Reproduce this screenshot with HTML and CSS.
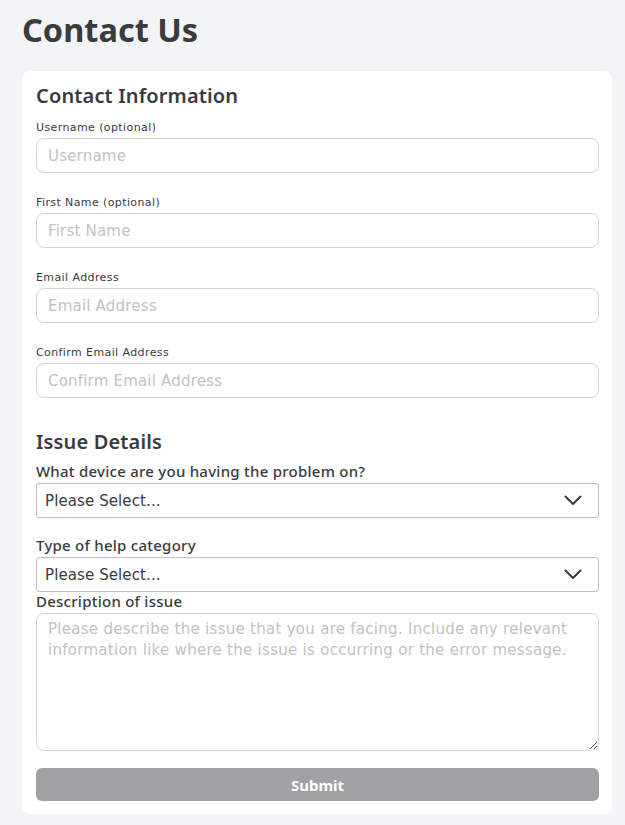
FILE: index.html
```html
<!DOCTYPE html>
<html lang="en">
<head>
<meta charset="utf-8">
<title>Contact Us</title>
<link rel="stylesheet" href="styles.css">
</head>
<body>
<div class="page">
  <h1 class="page-title">Contact Us</h1>
  <form class="card">
    <h2 class="section-title">Contact Information</h2>

    <div class="field field-first">
      <label class="small-label">Username (optional)</label>
      <input class="text-input" type="text" placeholder="Username">
    </div>
    <div class="field">
      <label class="small-label">First Name (optional)</label>
      <input class="text-input" type="text" placeholder="First Name">
    </div>
    <div class="field">
      <label class="small-label">Email Address</label>
      <input class="text-input" type="text" placeholder="Email Address">
    </div>
    <div class="field">
      <label class="small-label">Confirm Email Address</label>
      <input class="text-input" type="text" placeholder="Confirm Email Address">
    </div>

    <h2 class="section-title issue-title">Issue Details</h2>

    <label class="big-label">What device are you having the problem on?</label>
    <div class="select">
      <span class="select-text">Please Select...</span>
      <svg class="chevron" width="18" height="11" viewBox="0 0 18 11"><path d="M1.5 1.5 L9 9 L16.5 1.5" fill="none" stroke="#393b3d" stroke-width="2" stroke-linecap="round" stroke-linejoin="round"/></svg>
    </div>

    <label class="big-label second">Type of help category</label>
    <div class="select">
      <span class="select-text">Please Select...</span>
      <svg class="chevron" width="18" height="11" viewBox="0 0 18 11"><path d="M1.5 1.5 L9 9 L16.5 1.5" fill="none" stroke="#393b3d" stroke-width="2" stroke-linecap="round" stroke-linejoin="round"/></svg>
    </div>

    <label class="big-label third">Description of issue</label>
    <textarea class="textarea" placeholder="Please describe the issue that you are facing. Include any relevant information like where the issue is occurring or the error message."></textarea>

    <button class="submit" type="button">Submit</button>
  </form>
</div>
</body>
</html>
```

FILE: styles.css
```css
html, body {
  margin: 0;
  padding: 0;
  background: #f2f4f5;
}

body {
  font-family: "Noto Sans", "Open Sans", sans-serif;
  color: #393b3d;
}

.page {
  padding: 11px 13px 11px 22px;
}

.page-title {
  margin: 0 0 22px 0;
  font-size: 32.5px;
  line-height: 38px;
  font-weight: 700;
  color: #393b3d;
}

.card {
  background: #ffffff;
  border-radius: 8px;
  padding: 13px 13px 13px 14px;
  display: flex;
  flex-direction: column;
}

.section-title {
  margin: 0;
  font-size: 20px;
  line-height: 24px;
  font-weight: 600;
  letter-spacing: 0.15px;
  color: #393b3d;
}

.field {
  margin-top: 23px;
  display: flex;
  flex-direction: column;
}

.field-first {
  margin-top: 13px;
}

.small-label {
  font-family: "DejaVu Sans", sans-serif;
  font-size: 11px;
  line-height: 13px;
  letter-spacing: 0.4px;
  margin-bottom: 4px;
  color: #393b3d;
}

.text-input {
  box-sizing: border-box;
  height: 35px;
  border: 1px solid #d4d4d4;
  border-radius: 8px;
  padding: 0 11px;
  font-family: "DejaVu Sans", sans-serif;
  font-size: 15px;
  letter-spacing: 0.2px;
  color: #393b3d;
  outline: none;
}

.text-input::placeholder,
.textarea::placeholder {
  color: #c2c2c2;
}

.issue-title {
  margin-top: 32px;
}

.big-label {
  margin-top: 8px;
  margin-bottom: 3px;
  font-size: 15px;
  line-height: 18px;
  font-weight: 500;
  letter-spacing: 0.25px;
  color: #393b3d;
}

.big-label.second {
  margin-top: 18px;
}

.big-label.third {
  margin-top: 0;
}

.select {
  box-sizing: border-box;
  height: 35px;
  border: 1px solid #bdbebe;
  border-radius: 3px;
  padding: 0 16px 0 8px;
  display: flex;
  align-items: center;
  justify-content: space-between;
}

.select-text {
  font-family: "DejaVu Sans", sans-serif;
  font-size: 15px;
  letter-spacing: 0.1px;
  color: #393b3d;
}

.textarea {
  box-sizing: border-box;
  height: 138px;
  border: 1px solid #d4d4d4;
  border-radius: 8px;
  padding: 5px 11px;
  font-family: "DejaVu Sans", sans-serif;
  font-size: 15px;
  line-height: 21px;
  letter-spacing: 0.28px;
  color: #393b3d;
  resize: vertical;
  outline: none;
}

.submit {
  margin-top: 17px;
  height: 33px;
  border: none;
  border-radius: 6px;
  background: #a0a1a3;
  color: #ffffff;
  font-family: inherit;
  font-size: 15px;
  font-weight: 700;
}
```
